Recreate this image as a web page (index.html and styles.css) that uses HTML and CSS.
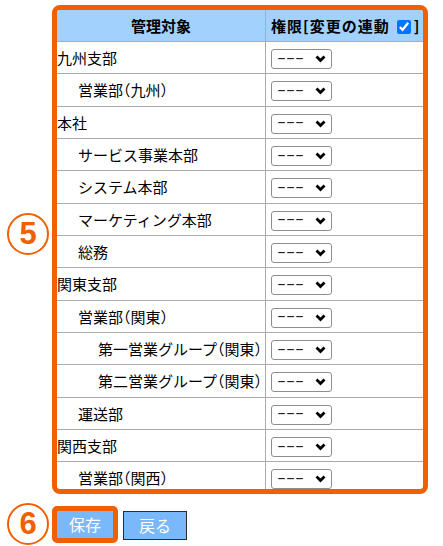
FILE: index.html
```html
<!DOCTYPE html>
<html lang="ja">
<head>
<meta charset="utf-8">
<link rel="stylesheet" href="styles.css">
</head>
<body>
<div class="page">
  <div class="marker marker-five"><span class="circle">5</span></div>
  <div class="frame">
    <table class="perm">
      <colgroup><col class="c-name"><col class="c-perm"></colgroup>
      <thead>
        <tr>
          <th class="h-name">管理対象</th>
          <th class="h-perm">権限[変更の連動<input type="checkbox" checked class="link-box">]</th>
        </tr>
      </thead>
      <tbody>
        <tr><td class="lv0">九州支部</td><td><span class="sel" role="combobox"><span class="val">---</span><svg class="chev" width="11" height="8" viewBox="0 0 11 8"><path d="M1.5 1.5 L5.5 5.5 L9.5 1.5" fill="none" stroke="#000" stroke-width="2.8"/></svg></span></td></tr>
        <tr><td class="lv1">営業部（九州）</td><td><span class="sel" role="combobox"><span class="val">---</span><svg class="chev" width="11" height="8" viewBox="0 0 11 8"><path d="M1.5 1.5 L5.5 5.5 L9.5 1.5" fill="none" stroke="#000" stroke-width="2.8"/></svg></span></td></tr>
        <tr><td class="lv0">本社</td><td><span class="sel" role="combobox"><span class="val">---</span><svg class="chev" width="11" height="8" viewBox="0 0 11 8"><path d="M1.5 1.5 L5.5 5.5 L9.5 1.5" fill="none" stroke="#000" stroke-width="2.8"/></svg></span></td></tr>
        <tr><td class="lv1">サービス事業本部</td><td><span class="sel" role="combobox"><span class="val">---</span><svg class="chev" width="11" height="8" viewBox="0 0 11 8"><path d="M1.5 1.5 L5.5 5.5 L9.5 1.5" fill="none" stroke="#000" stroke-width="2.8"/></svg></span></td></tr>
        <tr><td class="lv1">システム本部</td><td><span class="sel" role="combobox"><span class="val">---</span><svg class="chev" width="11" height="8" viewBox="0 0 11 8"><path d="M1.5 1.5 L5.5 5.5 L9.5 1.5" fill="none" stroke="#000" stroke-width="2.8"/></svg></span></td></tr>
        <tr><td class="lv1">マーケティング本部</td><td><span class="sel" role="combobox"><span class="val">---</span><svg class="chev" width="11" height="8" viewBox="0 0 11 8"><path d="M1.5 1.5 L5.5 5.5 L9.5 1.5" fill="none" stroke="#000" stroke-width="2.8"/></svg></span></td></tr>
        <tr><td class="lv1">総務</td><td><span class="sel" role="combobox"><span class="val">---</span><svg class="chev" width="11" height="8" viewBox="0 0 11 8"><path d="M1.5 1.5 L5.5 5.5 L9.5 1.5" fill="none" stroke="#000" stroke-width="2.8"/></svg></span></td></tr>
        <tr><td class="lv0">関東支部</td><td><span class="sel" role="combobox"><span class="val">---</span><svg class="chev" width="11" height="8" viewBox="0 0 11 8"><path d="M1.5 1.5 L5.5 5.5 L9.5 1.5" fill="none" stroke="#000" stroke-width="2.8"/></svg></span></td></tr>
        <tr><td class="lv1">営業部（関東）</td><td><span class="sel" role="combobox"><span class="val">---</span><svg class="chev" width="11" height="8" viewBox="0 0 11 8"><path d="M1.5 1.5 L5.5 5.5 L9.5 1.5" fill="none" stroke="#000" stroke-width="2.8"/></svg></span></td></tr>
        <tr><td class="lv2">第一営業グループ（関東）</td><td><span class="sel" role="combobox"><span class="val">---</span><svg class="chev" width="11" height="8" viewBox="0 0 11 8"><path d="M1.5 1.5 L5.5 5.5 L9.5 1.5" fill="none" stroke="#000" stroke-width="2.8"/></svg></span></td></tr>
        <tr><td class="lv2">第二営業グループ（関東）</td><td><span class="sel" role="combobox"><span class="val">---</span><svg class="chev" width="11" height="8" viewBox="0 0 11 8"><path d="M1.5 1.5 L5.5 5.5 L9.5 1.5" fill="none" stroke="#000" stroke-width="2.8"/></svg></span></td></tr>
        <tr><td class="lv1">運送部</td><td><span class="sel" role="combobox"><span class="val">---</span><svg class="chev" width="11" height="8" viewBox="0 0 11 8"><path d="M1.5 1.5 L5.5 5.5 L9.5 1.5" fill="none" stroke="#000" stroke-width="2.8"/></svg></span></td></tr>
        <tr><td class="lv0">関西支部</td><td><span class="sel" role="combobox"><span class="val">---</span><svg class="chev" width="11" height="8" viewBox="0 0 11 8"><path d="M1.5 1.5 L5.5 5.5 L9.5 1.5" fill="none" stroke="#000" stroke-width="2.8"/></svg></span></td></tr>
        <tr><td class="lv1">営業部（関西）</td><td><span class="sel" role="combobox"><span class="val">---</span><svg class="chev" width="11" height="8" viewBox="0 0 11 8"><path d="M1.5 1.5 L5.5 5.5 L9.5 1.5" fill="none" stroke="#000" stroke-width="2.8"/></svg></span></td></tr>
      </tbody>
    </table>
  </div>
  <div class="marker marker-six"><span class="circle">6</span></div>
  <div class="actions">
    <span class="highlight"><button class="btn btn-save">保存</button></span>
    <button class="btn btn-back">戻る</button>
  </div>
</div>
</body>
</html>
```

FILE: styles.css
```css
* { box-sizing: border-box; }
html, body { margin: 0; padding: 0; background: #fff; }
body {
  font-family: "Noto Sans CJK JP", "Noto Sans", sans-serif;
  font-size: 15px;
  color: #000;
}
.page {
  display: grid;
  grid-template-columns: 52px 376px;
  grid-template-rows: auto auto;
  row-gap: 9px;
  padding-top: 5px;
}
.marker {
  display: flex;
  justify-content: center;
  padding-left: 4px;
}
.marker-five { align-self: start; margin-top: 208px; }
.marker-six { align-self: center; }
.circle {
  width: 42px;
  height: 42px;
  border: 2px solid #f06000;
  border-radius: 50%;
  color: #f06000;
  font-family: "Liberation Sans", Arial, sans-serif;
  font-weight: bold;
  font-size: 31px;
  line-height: 38px;
  text-align: center;
}
.frame {
  height: 489px;
  border: 5px solid #f06000;
  border-radius: 8px;
  overflow: hidden;
}
.perm {
  width: 366px;
  table-layout: fixed;
  border-collapse: separate;
  border-spacing: 0;
}
.c-name { width: 209px; }
.c-perm { width: 157px; }
.perm th, .perm td {
  padding: 0;
  border-bottom: 1px solid #ababab;
  vertical-align: middle;
  white-space: nowrap;
}
.perm th { height: 32px; }
.perm td { height: 32.33px; font-feature-settings: "halt"; }
.perm th:first-child, .perm td:first-child { border-right: 1px solid #ababab; }
.perm thead th {
  background: #a2d1fd;
  font-weight: bold;
  font-size: 15px;
}
.h-name { text-align: center; }
.perm th.h-perm { text-align: left; padding-left: 5px; letter-spacing: 1px; }
.link-box {
  width: 14px;
  height: 14px;
  margin: 0 3px 0 7px;
  vertical-align: -2px;
}
.lv0 { padding-left: 0; }
.perm td.lv1 { padding-left: 21px; }
.perm td.lv2 { padding-left: 41px; }
.perm td + td { padding-left: 5px; }
.sel {
  position: relative;
  display: inline-flex;
  align-items: center;
  width: 61px;
  height: 20px;
  border: 1px solid #8e8e8e;
  border-radius: 3px;
  background: #fff;
  vertical-align: middle;
  padding-left: 5px;
}
.val {
  display: inline-block;
  font-family: "Liberation Sans", Arial, sans-serif;
  font-size: 15px;
  line-height: 18px;
  color: #222;
  transform: scaleX(1.8);
  transform-origin: left center;
  margin-top: -3px;
}
.chev {
  position: absolute;
  left: 43px;
  top: 5px;
  pointer-events: none;
}
.actions {
  display: flex;
  align-items: center;
  gap: 5px;
}
.highlight {
  display: inline-block;
  border: 5px solid #f06000;
  border-radius: 5px;
}
.btn {
  font-family: "Noto Sans CJK JP", sans-serif;
  font-size: 16px;
  color: #fff;
  background: #79b9fb;
  padding: 0;
  display: block;
}
.btn-save {
  width: 56px;
  height: 27px;
  border: none;
}
.btn-back {
  width: 64px;
  height: 29px;
  border: 1px solid #2c2c2c;
  margin-top: 2px;
}
```
